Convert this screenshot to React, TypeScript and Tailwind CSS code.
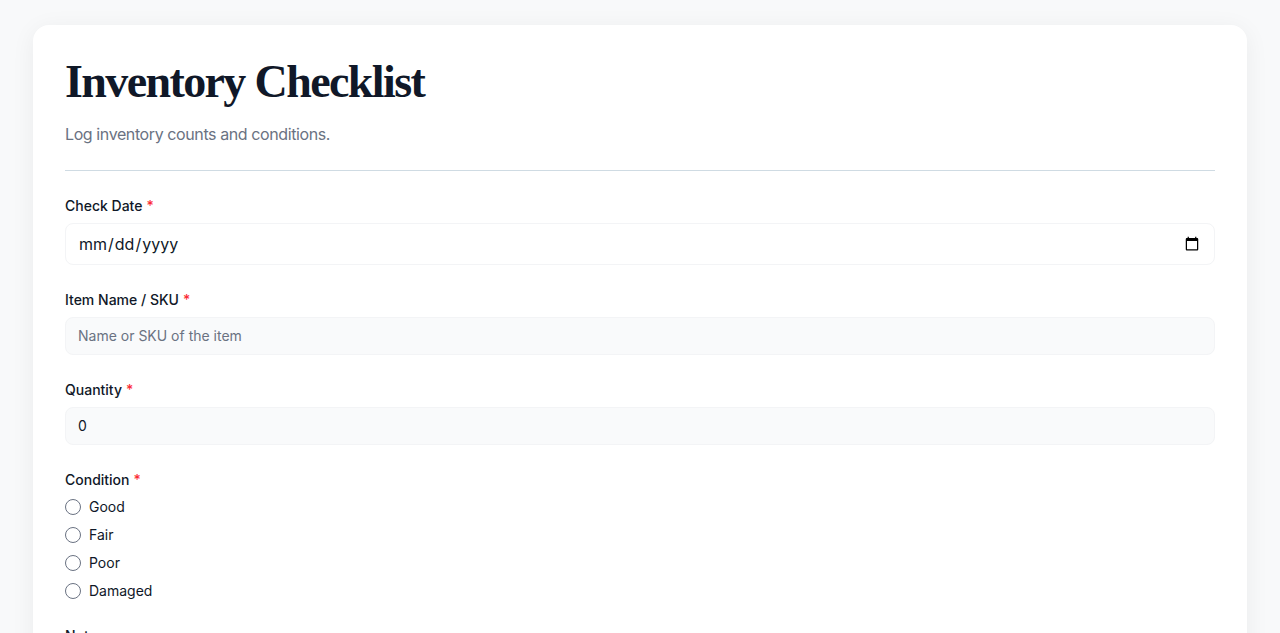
import React from "react";

const conditions = ["Good", "Fair", "Poor", "Damaged"];

const Label: React.FC<{ htmlFor?: string; children: React.ReactNode; required?: boolean }> = ({
  htmlFor,
  children,
  required,
}) => (
  <label htmlFor={htmlFor} className="block pt-px text-sm font-medium leading-[19px] text-gray-900">
    {children}
    {required && <span className="ml-1 text-red-500">*</span>}
  </label>
);

export default function App() {
  return (
    <div
      className="min-h-screen bg-[#f8f9fa] px-[33px] pt-[25px] pb-10"
      style={{ fontFamily: "Inter, 'Liberation Sans', sans-serif" }}
    >
      <div className="rounded-2xl bg-white px-8 pt-[33px] pb-8 shadow-[0_4px_24px_rgba(15,23,42,0.06)]">
        <div className="border-b border-[#cfdbe3] pb-6">
          <h1
            className="text-[46px] leading-[48px] font-bold tracking-[-0.035em] text-gray-900"
            style={{ fontFamily: "'Liberation Serif', 'DejaVu Serif', serif" }}
          >
            Inventory Checklist
          </h1>
          <p className="mt-4 text-base leading-6 tracking-[-0.025em] text-gray-500">
            Log inventory counts and conditions.
          </p>
        </div>

        <form className="mt-6 space-y-6">
          <div>
            <Label htmlFor="check-date" required>
              Check Date
            </Label>
            <input
              id="check-date"
              type="date"
              className="mt-2 block w-full rounded-lg border border-gray-100 bg-white px-3 py-2 text-base leading-6 text-gray-900 outline-none"
            />
          </div>

          <div>
            <Label htmlFor="item-name" required>
              Item Name / SKU
            </Label>
            <input
              id="item-name"
              type="text"
              placeholder="Name or SKU of the item"
              className="mt-2 block w-full rounded-lg border border-gray-100 bg-gray-50 px-3 py-2 text-sm leading-5 text-gray-900 placeholder:text-gray-500 outline-none"
            />
          </div>

          <div>
            <Label htmlFor="quantity" required>
              Quantity
            </Label>
            <input
              id="quantity"
              type="number"
              defaultValue={0}
              className="mt-2 block w-full rounded-lg border border-gray-100 bg-gray-50 px-3 py-2 text-sm leading-5 text-gray-900 outline-none"
            />
          </div>

          <div>
            <Label required>Condition</Label>
            <div className="mt-2 space-y-2">
              {conditions.map((c) => (
                <label key={c} className="flex h-5 items-center gap-2 text-sm text-gray-900">
                  <span className="h-4 w-4 rounded-full border border-gray-500 bg-white" />
                  {c}
                </label>
              ))}
            </div>
          </div>

          <div>
            <Label htmlFor="notes">Notes</Label>
            <textarea
              id="notes"
              rows={4}
              className="mt-2 block w-full rounded-lg border border-gray-100 bg-gray-50 px-3 py-2 text-sm text-gray-900 outline-none"
            />
          </div>
        </form>
      </div>
    </div>
  );
}
